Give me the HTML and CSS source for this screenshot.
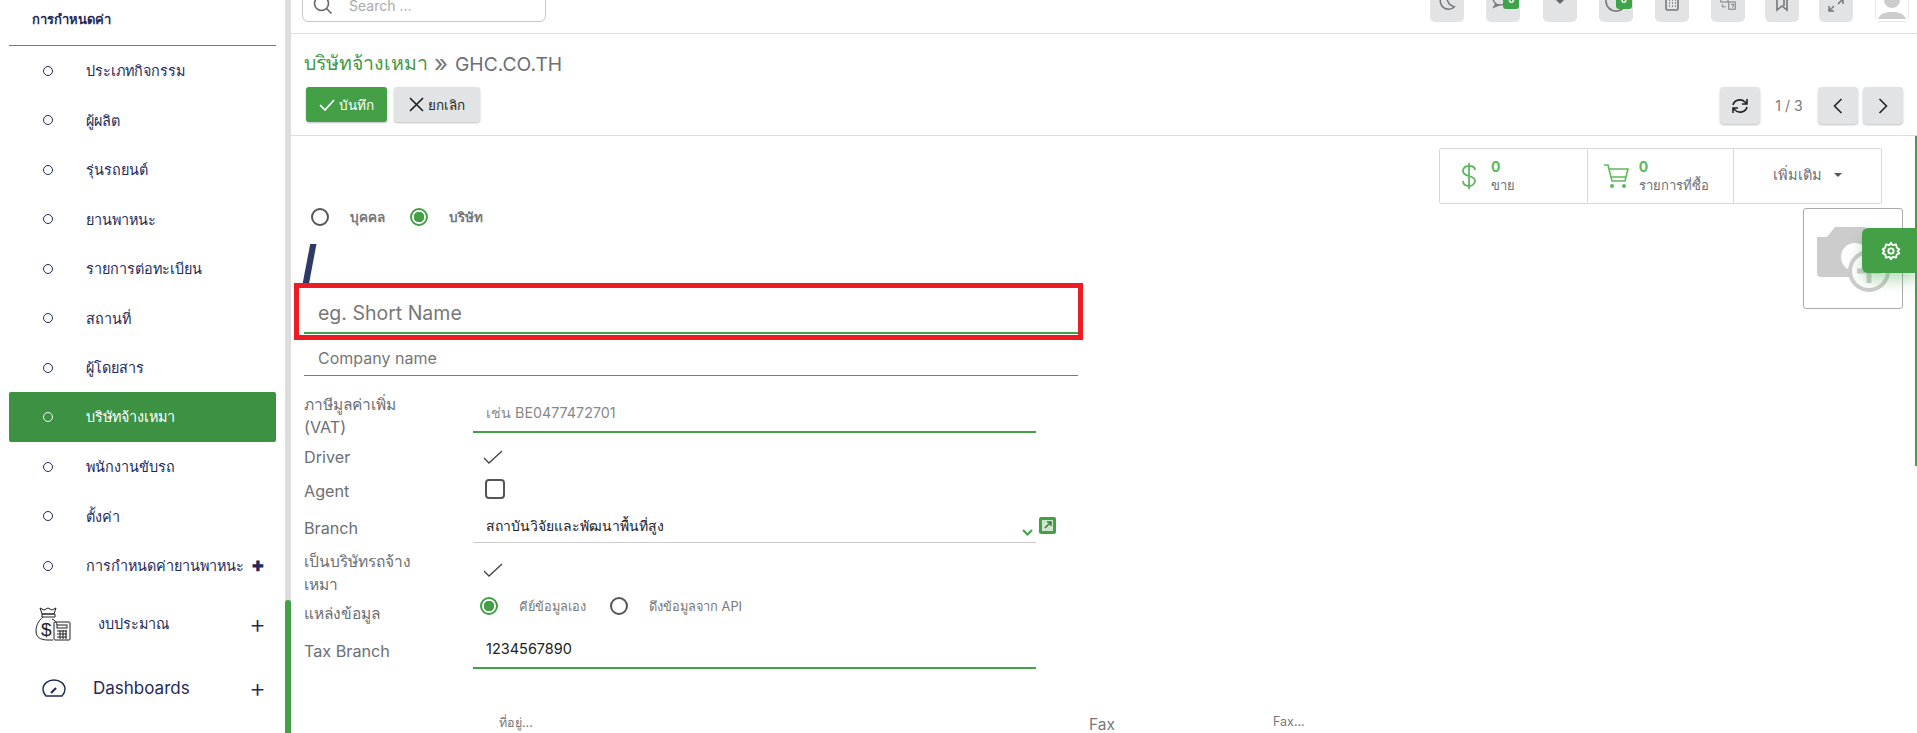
FILE: index.html
```html
<!DOCTYPE html>
<html lang="th">
<head>
<meta charset="utf-8">
<title>บริษัทจ้างเหมา</title>
<link rel="stylesheet" href="styles.css">
</head>
<body>
<div class="app">
  <aside class="sidebar">
    <div class="side-title">การกำหนดค่า</div>
    <ul class="side-list">
      <li class="side-item"><span class="dot"></span>ประเภทกิจกรรม</li>
      <li class="side-item"><span class="dot"></span>ผู้ผลิต</li>
      <li class="side-item"><span class="dot"></span>รุ่นรถยนต์</li>
      <li class="side-item"><span class="dot"></span>ยานพาหนะ</li>
      <li class="side-item"><span class="dot"></span>รายการต่อทะเบียน</li>
      <li class="side-item"><span class="dot"></span>สถานที่</li>
      <li class="side-item"><span class="dot"></span>ผู้โดยสาร</li>
      <li class="side-item active"><span class="dot"></span>บริษัทจ้างเหมา</li>
      <li class="side-item"><span class="dot"></span>พนักงานขับรถ</li>
      <li class="side-item"><span class="dot"></span>ตั้งค่า</li>
      <li class="side-item"><span class="dot"></span>การกำหนดค่ายานพาหนะ<b class="bold-plus">✚</b></li>
    </ul>
    <div class="side-group budget">
      <svg class="g-icon" width="36" height="34" viewBox="0 0 36 34" fill="none" stroke="#222" stroke-width="1"><path d="M5 1l4 2 4-2 4 2 4-2-2 6H7zM7 7h13v3H7zM8 10C3 14 1 19 1 24c0 6 4 9 12 9h5"/><path d="M17 12c3 1 5 4 5 6"/><rect x="19" y="15" width="16" height="18" rx="1"/><rect x="22" y="18" width="10" height="3"/><path d="M22 24h10M22 27h10M22 30h10M25 23v9M28 23v9M31 23v9"/><text x="6" y="29" font-size="19" font-family="Liberation Sans" fill="#222" stroke="none">$</text></svg>
      <span class="g-text th">งบประมาณ</span><span class="plus">+</span>
    </div>
    <div class="side-group dash">
      <svg class="g-icon gauge" width="24" height="18" viewBox="0 0 24 18" fill="none" stroke="#1f2a5a" stroke-width="1.4"><path d="M4 17h16c2-2 3-4 3-7A11 9 0 0 0 1 10c0 3 1 5 3 7z"/><path d="M9 14l5-5" stroke-width="2.2"/></svg>
      <span class="g-text">Dashboards</span><span class="plus">+</span>
    </div>
  </aside>
  <div class="side-track"><div class="side-thumb"></div></div>

  <main class="main">
    <header class="topbar">
      <div class="search">
        <svg width="20" height="20" viewBox="0 0 20 20" fill="none" stroke="#666" stroke-width="1.6"><circle cx="8.5" cy="8.5" r="7"/><path d="M13.5 13.5l5 5"/></svg>
        <span>Search ...</span>
      </div>
      <div class="tools">
        <div class="tool-group wide">
          <div class="tool"><svg width="18" height="22" viewBox="0 0 22 26" fill="none" stroke="#777" stroke-width="1.8"><path d="M13 3a10 10 0 1 0 7 17A11 11 0 0 1 13 3z"/></svg></div>
          <div class="tool"><svg width="22" height="24" viewBox="0 0 22 24" fill="none" stroke="#777" stroke-width="1.4"><circle cx="8" cy="10" r="7"/><path d="M4 16l-2 3 5-2M13 19c2 1 5 1 7 0"/></svg><span class="badge">0</span></div>
          <div class="tool caret-tool"><span class="caret"></span></div>
          <div class="tool globe"><svg width="22" height="26" viewBox="0 0 22 26" fill="none" stroke="#777" stroke-width="1.6"><circle cx="11" cy="13" r="10"/><path d="M11 15l7-2"/></svg><span class="badge">0</span></div>
          <div class="tool"><svg width="16" height="26" viewBox="0 0 16 26" fill="none" stroke="#777" stroke-width="1.6"><rect x="2" y="1" width="12" height="23" rx="1.5"/><path d="M2 10h12M5 14h1M8 14h1M11 14h1M5 17h1M8 17h1M11 17h1M5 20h1M8 20h1M11 20h1"/></svg></div>
        </div>
        <div class="tool-group">
          <div class="tool"><svg width="16" height="20" viewBox="0 0 20 24" fill="none" stroke="#777" stroke-width="1.2"><rect x="1" y="1" width="9" height="11"/><rect x="11" y="12" width="8" height="9"/><path d="M13 4h3v4M3 15v3h4M4 8l2-5 2 5M14 15h3l-1 4"/></svg></div>
          <div class="tool"><svg width="14" height="24" viewBox="0 0 14 24" fill="none" stroke="#777" stroke-width="1.6"><path d="M2 1h10v21l-5-4-5 4zM9 1v17"/></svg></div>
          <div class="tool"><svg width="18" height="14" viewBox="0 0 18 14" fill="none" stroke="#777" stroke-width="1.5"><path d="M2 13l5-5M2 8v5h5M16 1l-5 5M11 1h5v5"/></svg></div>
        </div>
        <div class="tool avatar"><svg width="32" height="24" viewBox="0 0 32 24"><rect width="32" height="24" fill="#fff"/><circle cx="16" cy="3" r="8" fill="#ccc"/><path d="M2 22c2-6 8-7 14-7s12 1 14 7z" fill="#ccc"/></svg></div>
      </div>
    </header>

    <section class="control">
      <div class="crumbs"><span class="crumb-link">บริษัทจ้างเหมา</span><span class="crumb-sep">»</span><span class="crumb-cur">GHC.CO.TH</span></div>
      <div class="actions">
        <div class="actions-left">
          <button class="btn primary"><svg width="16" height="12" viewBox="0 0 16 12" fill="none" stroke="#fff" stroke-width="1.7"><path d="M1 6l5 5 9-10"/></svg>บันทึก</button>
          <button class="btn"><svg width="15" height="15" viewBox="0 0 15 15" fill="none" stroke="#1c1c1c" stroke-width="1.6"><path d="M1 1l13 13M14 1L1 14"/></svg>ยกเลิก</button>
        </div>
        <div class="pager">
          <button class="pg-btn"><svg width="18" height="18" viewBox="0 0 18 18" fill="none" stroke="#222" stroke-width="1.6"><path d="M2 8a7 6.500 0 0 1 12-3l2 2M16 2v5h-5M16 10a7 6.500 0 0 1-12 3l-2-2M2 16v-5h5"/></svg></button>
          <span class="pg-count">1 / 3</span>
          <button class="pg-btn pg-prev"><svg width="10" height="16" viewBox="0 0 10 16" fill="none" stroke="#222" stroke-width="1.6"><path d="M8.500 1L1.500 8l7 7"/></svg></button>
          <button class="pg-btn"><svg width="10" height="16" viewBox="0 0 10 16" fill="none" stroke="#222" stroke-width="1.6"><path d="M1.500 1l7 7-7 7"/></svg></button>
        </div>
      </div>
    </section>

    <section class="sheet">
      <div class="scroll-mark"></div>
      <div class="stats">
        <div class="stat">
          <svg class="stat-ic dollar" width="16" height="26" viewBox="0 0 16 26" fill="none" stroke="#5cb85c" stroke-width="1.8"><path d="M14 7c0-3-3-4-6-4S2 4 2 8c0 7 12 3 12 10 0 3-3 5-6 5s-6-1-6-5M8 0v26"/></svg>
          <div class="stat-text"><b>0</b><span>ขาย</span></div>
        </div>
        <div class="stat">
          <svg class="stat-ic" width="25" height="24" viewBox="0 0 25 24" fill="none" stroke="#5cb85c" stroke-width="1.6"><path d="M0 1h4l4 16h13l3-12H5M7 13h15"/><circle cx="8" cy="22" r="1.200" fill="#5cb85c"/><circle cx="20" cy="22" r="1.200" fill="#5cb85c"/></svg>
          <div class="stat-text"><b>0</b><span>รายการที่ซื้อ</span></div>
        </div>
        <div class="stat more"><span>เพิ่มเติม</span><i class="caret dark"></i></div>
      </div>

      <div class="photo">
        <svg width="78" height="68" viewBox="0 0 78 68"><path d="M4 10h10l8-10h30l6 10h0v40H8a4 4 0 0 1-4-4z" fill="#ccc" transform="translate(-2 0)"/><circle cx="40" cy="30" r="14" fill="#fff"/><circle cx="54" cy="44" r="19" fill="#fff" stroke="#ccc" stroke-width="4"/><path d="M54 32v24M42 44h24" stroke="#ccc" stroke-width="5"/></svg>
      </div>
      <div class="cog"><svg width="20" height="20" viewBox="0 0 24 24" fill="none" stroke="#fff" stroke-width="2.200"><circle cx="12" cy="12" r="3.200"/><path d="M12 2l2 3 4-1 1 4 3 2-2 2 2 3-3 1-1 4-4-1-2 3-2-3-4 1-1-4-3-1 2-3-2-2 3-2 1-4 4 1z" stroke-linejoin="round"/></svg></div>

      <div class="radios top-radios">
        <label class="radio"><i class="ring"></i><span>บุคคล</span></label>
        <label class="radio"><i class="ring on"></i><span>บริษัท</span></label>
      </div>
      <div class="slash">/</div>
      <div class="title-field"><span>eg. Short Name</span></div>
      <div class="name-field"><span>Company name</span></div>

      <div class="form">
        <div class="lbl">ภาษีมูลค่าเพิ่ม<br><span class="en">(VAT)</span></div>
        <div class="val line green"><span class="ph">เช่น BE0477472701</span></div>

        <div class="lbl mid en">Driver</div>
        <div class="val mid-v"><svg width="20" height="14" viewBox="0 0 20 14" fill="none" stroke="#444" stroke-width="1.300"><path d="M1 8l5 5L19 1"/></svg></div>

        <div class="lbl mid en">Agent</div>
        <div class="val mid-v"><i class="box"></i></div>

        <div class="lbl mid en branch-l">Branch</div>
        <div class="val line gray branch"><span class="dark-v">สถาบันวิจัยและพัฒนาพื้นที่สูง</span>
          <svg class="chev" width="11" height="7" viewBox="0 0 11 7" fill="none" stroke="#43a047" stroke-width="2"><path d="M1 1l4.500 4.500L10 1"/></svg>
          <svg class="ext" width="17" height="17" viewBox="0 0 17 17"><rect width="17" height="17" rx="2" fill="#43a047"/><rect x="3" y="3" width="11" height="11" fill="#cfe5d0"/><path d="M6 11l6-6M8 5h4v4" stroke="#2e7d32" stroke-width="1.500" fill="none"/></svg>
        </div>

        <div class="lbl hire">เป็นบริษัทรถจ้าง<br>เหมา</div>
        <div class="val mid-v"><svg width="20" height="14" viewBox="0 0 20 14" fill="none" stroke="#444" stroke-width="1.300"><path d="M1 8l5 5L19 1"/></svg></div>

        <div class="lbl mid">แหล่งข้อมูล</div>
        <div class="val radios source">
          <label class="radio"><i class="ring on"></i><span>คีย์ข้อมูลเอง</span></label>
          <label class="radio"><i class="ring"></i><span>ดึงข้อมูลจาก API</span></label>
        </div>

        <div class="lbl mid en tax-l">Tax Branch</div>
        <div class="val line green"><span class="dark-v num">1234567890</span></div>
      </div>

      <div class="contact">
        <span class="addr">ที่อยู่...</span>
        <span class="fax-l">Fax</span>
        <span class="fax-v">Fax...</span>
      </div>

      <div class="callout"></div>
    </section>
  </main>
</div>
</body>
</html>
```
FILE: styles.css
```css
* { box-sizing: border-box; }
html, body { margin: 0; height: 100%; overflow: hidden; background: #fff; }
body { font-family: "Inter", "Noto Sans", sans-serif; color: #6c6f75; font-size: 14px; }
button { font: inherit; border: 0; cursor: pointer; }
.app { display: flex; width: 1917px; height: 733px; overflow: hidden; }

.sidebar { width: 285px; flex: none; padding: 0 9px; color: #1f2a5a; }
.side-title { height: 46px; padding: 9px 23px 0; font-size: 13px; font-weight: 700; border-bottom: 1px solid #777; line-height: 20px; color: #1f2a5a; }
.side-list { list-style: none; margin: 0; padding: 0; }
.side-item { display: flex; align-items: center; height: 49.500px; padding-left: 34px; font-size: 14.400px; border-radius: 2px; }
.dot { width: 10px; height: 10px; border: 1.500px solid #1f2a5a; border-radius: 50%; margin-right: 33px; flex: none; }
.side-item.active { background: #3c9142; color: #fff; height: 50.500px; margin-top: -1px; }
.active .dot { border-color: #fff; }
.bold-plus { margin-left: 8px; font-size: 14px; color: #1f2a5a; }
.side-group { display: flex; align-items: center; }
.budget { height: 66px; padding-left: 26px; }
.dash { height: 62px; padding-left: 33px; }
.g-icon { flex: none; }
.g-text { font-size: 17px; }
.g-text.th { font-size: 14.400px; margin-left: 27px; }
.dash .g-text { margin-left: 27px; }
.plus { margin-left: auto; margin-right: 10px; font-size: 26px; font-weight: 300; line-height: 1; color: #1f2a5a; }

.side-track { width: 6px; flex: none; background: #ddd; display: flex; flex-direction: column; justify-content: flex-end; }
.side-thumb { height: 133px; background: #43a047; border-radius: 3px 3px 0 0; }

.main { flex: 1; min-width: 0; display: flex; flex-direction: column; }

.topbar { height: 34px; flex: none; display: flex; justify-content: space-between; align-items: flex-end; padding: 0 8px 11px 11px; border-bottom: 1px solid #ddd; overflow: hidden; }
.search { width: 244px; height: 40px; border: 1px solid #c8c8c8; border-radius: 6px; display: flex; align-items: center; padding: 6px 0 0 10px; gap: 16px; color: #aaa; font-size: 14px; flex: none; }
.tools { display: flex; gap: 22px; }
.tool-group { display: flex; gap: 20px; }
.tool-group.wide { gap: 22.250px; }
.tool { position: relative; width: 34px; height: 40px; padding-bottom: 10px; background: #e2e3e5; border-radius: 5px; display: flex; align-items: flex-end; justify-content: center; flex: none; }
.tool.caret-tool { padding-bottom: 18px; }
.tool.globe { padding-bottom: 8px; }
.tool.avatar { background: #e8e8e8; padding: 0 1px 1px; }
.badge { position: absolute; top: 5px; right: 1px; width: 16px; height: 22px; background: #3fa34a; border-radius: 3px; color: #fff; font-size: 9px; font-weight: 700; display: flex; align-items: flex-end; justify-content: center; padding-bottom: 5px; line-height: 1; }
.caret { width: 0; height: 0; border: 4px solid transparent; border-top: 4px solid #666; border-bottom: 0; display: inline-block; }
.caret.dark { border-top-color: #555; }

.control { height: 102px; flex: none; padding: 0 14px 0 13px; border-bottom: 1px solid #ddd; }
.crumbs { height: 53px; display: flex; align-items: center; gap: 6px; font-size: 19.500px; padding-top: 6px; }
.crumb-link { color: #3f9a47; }
.crumb-sep { color: #777; font-size: 24px; line-height: 1; }
.crumb-cur { color: #6c6f75; margin-left: 1px; font-size: 19.300px; }
.actions { display: flex; justify-content: space-between; align-items: flex-start; padding-left: 2px; }
.actions-left { display: flex; gap: 7px; }
.btn { height: 35px; width: 86px; display: flex; align-items: center; justify-content: center; gap: 4px; background: #e2e3e5; color: #222; font-size: 13.500px; font-weight: 500; border-radius: 3px; box-shadow: 0 1px 2px rgba(0,0,0,.25); }
.btn.primary { width: 81px; background: #43a047; color: #fff; }
.pager { display: flex; align-items: center; }
.pg-btn { width: 40px; height: 37px; background: #e2e3e5; border-radius: 4px; display: flex; align-items: center; justify-content: center; box-shadow: 0 1px 2px rgba(0,0,0,.25); padding: 0; }
.pg-count { width: 58px; text-align: center; font-size: 14px; color: #777; }
.pg-prev { margin-right: 5px; }

.sheet { position: relative; flex: 1; min-height: 0; padding-left: 13px; overflow: hidden; }
.scroll-mark { position: absolute; right: 0; top: 0; width: 2px; height: 330px; background: #43a047; }
.stats { position: absolute; left: 1148px; top: 12px; width: 443px; height: 56px; display: flex; border: 1px solid #d8d8dc; border-radius: 2px; }
.stat { display: flex; align-items: center; width: 148px; border-right: 1px solid #d8d8dc; padding-left: 21px; gap: 14px; }
.stat + .stat { padding-left: 16px; gap: 10px; width: 147px; }
.stat-text { display: flex; flex-direction: column; font-size: 13px; line-height: 18px; padding-top: 2px; }
.stat-text b { color: #5cb85c; font-size: 14px; margin-top: -3px; }
.stat.more { border-right: 0; justify-content: center; padding: 0 0 3px; gap: 12px; font-size: 14.500px; }
.photo { position: absolute; left: 1512px; top: 72px; width: 100px; height: 101px; border: 1px solid #aaa; border-radius: 3px; padding: 18px 0 0 11px; }
.cog { position: absolute; right: 0; top: 92px; width: 55px; height: 45px; background: #43a047; border-radius: 6px 0 0 6px; display: flex; align-items: center; justify-content: center; padding-left: 3px; box-shadow: 0 8px 14px rgba(67,160,71,.35); }

.radios { display: flex; align-items: center; }
.radio { display: flex; align-items: center; }
.ring { width: 18px; height: 18px; border: 2px solid #555; border-radius: 50%; flex: none; display: block; }
.ring.on { border-color: #43a047; background: radial-gradient(circle, #43a047 0 5px, #fff 5.500px); }
.top-radios { padding: 71px 0 0 7px; height: 90px; font-size: 13.500px; font-weight: 700; color: #777; }
.top-radios .radio { width: 99px; }
.top-radios span { margin-left: 21px; }
.slash { height: 56px; font-family: "Liberation Sans", sans-serif; font-size: 54px; line-height: 52px; font-weight: 700; color: #2c3a66; margin: 12px 0 0 -2px; }
.title-field { width: 774px; height: 45px; border-bottom: 2px solid #43a047; padding: 12px 0 0 14px; font-size: 19.500px; line-height: 25px; color: #777; margin-top: -5px; }
.name-field { width: 774px; height: 42px; border-bottom: 1px solid #43a047; padding: 14px 0 0 14px; font-size: 16px; line-height: 20px; color: #777; }

.form { display: grid; grid-template-columns: 169px 563px; grid-template-rows: 40px 48px 21px 41px 54px 32px 40px; padding-top: 17px; font-size: 15.500px; line-height: 23px; }
.lbl { color: #6c6f75; }
.en { font-size: 16.200px; }
.lbl.mid { display: flex; align-items: center; }
.branch-l { padding-top: 11px; }
.hire { padding-top: 7px; }
.tax-l { padding-top: 5px; }
.val { display: flex; align-items: center; padding-left: 13px; }
.line { position: relative; }
.line.green { border-bottom: 2px solid #43a047; }
.line.gray { border-bottom: 1px solid #ccc; }
.ph { color: #888; font-size: 14.300px; }
.dark-v { color: #222; }
.num { font-size: 14.500px; }
.mid-v { padding-left: 10px; }
.box { display: block; width: 20px; height: 20px; margin: -5px 0 0 2px; border: 2px solid #555; border-radius: 4px; }
.branch { font-size: 14px; font-weight: 500; padding-top: 7px; line-height: 20px; }
.chev { position: absolute; right: 3px; bottom: 6px; }
.ext { position: absolute; right: -20px; top: 15px; }
.source { font-size: 12.800px; color: #777; padding-bottom: 14px; }
.source .radio:first-child { width: 130px; }
.source span { margin-left: 21px; }
.source .ring { margin-left: -6px; }

.contact { display: grid; grid-template-columns: 590px 184px auto; align-items: end; height: 64px; padding-left: 195px; font-size: 12.500px; line-height: 16px; color: #777; }
.addr { margin-bottom: 2px; }
.fax-l { font-size: 15.500px; }
.fax-v { margin-bottom: 3px; }

.callout { position: absolute; left: 3px; top: 147px; width: 789px; height: 57px; border: 5px solid #ed1c24; pointer-events: none; }
```
